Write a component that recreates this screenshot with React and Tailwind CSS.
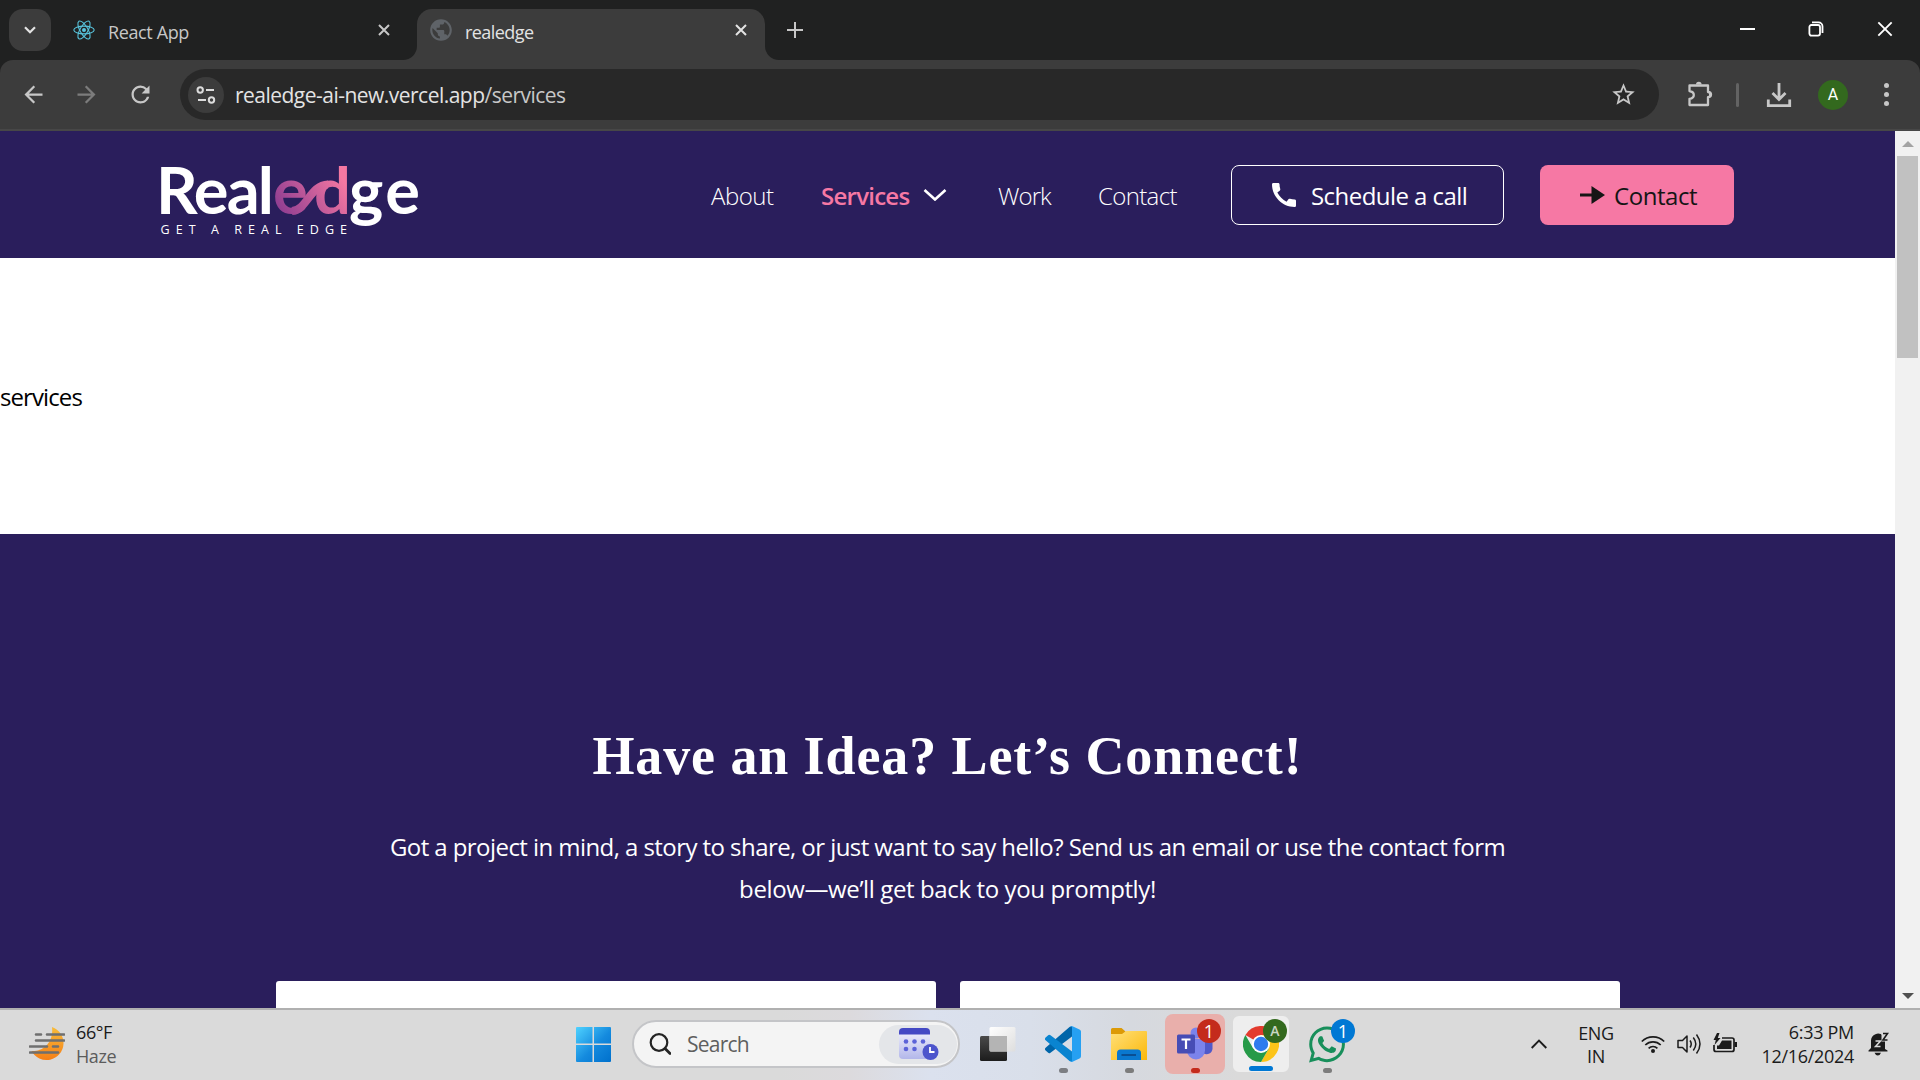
import React from "react";
import { MdPublic, MdStarBorder, MdArrowBack, MdArrowForward, MdRefresh, MdCall } from "react-icons/md";
import { FaWhatsapp } from "react-icons/fa";

const CloseIcon = ({ className }) => (
  <svg className={className} viewBox="0 0 12 12" fill="none" stroke="currentColor">
    <path d="M1 1l10 10M11 1L1 11" />
  </svg>
);

const ReactLogo = () => (
  <svg className="h-[22px] w-[22px]" viewBox="-11 -11 22 22" fill="none" stroke="#58c4dc" strokeWidth="1.1">
    <circle r="2" fill="#58c4dc" stroke="none" />
    <ellipse rx="10.2" ry="3.9" />
    <ellipse rx="10.2" ry="3.9" transform="rotate(60)" />
    <ellipse rx="10.2" ry="3.9" transform="rotate(120)" />
  </svg>
);

function TabStrip() {
  return (
    <div className="flex h-[60px] bg-[#202121]">
      <button className="mt-[9px] ml-[9px] flex h-[42px] w-[42px] items-center justify-center rounded-[14px] bg-[#3c3c3c]">
        <svg className="h-3 w-3" viewBox="0 0 12 12" fill="none" stroke="#e3e3e3" strokeWidth="2.2">
          <path d="M1 3.2l5 5 5-5" />
        </svg>
      </button>
      <div className="flex w-[352px] items-center pl-[22px] text-[#c7c7c7]">
        <ReactLogo />
        <span className="ml-[13px] w-[200px] pt-[3px] text-[18px] leading-6 tracking-[-0.38px]">React App</span>
        <CloseIcon className="ml-[70px] h-3 w-3 stroke-2" />
      </div>
      <div className="h-[14px] w-[14px] self-end bg-[#3c3c3c]">
        <div className="h-full w-full rounded-br-[14px] bg-[#202121]" />
      </div>
      <div className="mt-[9px] flex w-[348px] items-center rounded-t-[15px] bg-[#3c3c3c] pb-[9px] pl-[11px] text-[#e3e3e3]">
        <MdPublic className="h-[26px] w-[26px] text-[#5f6368]" />
        <span className="ml-[11px] w-[200px] pt-[3px] text-[18px] leading-6 tracking-[-0.55px]">realedge</span>
        <CloseIcon className="ml-[70px] h-3 w-3 stroke-2" />
      </div>
      <div className="h-[14px] w-[14px] self-end bg-[#3c3c3c]">
        <div className="h-full w-full rounded-bl-[14px] bg-[#202121]" />
      </div>
      <svg className="mt-[22px] ml-2 h-4 w-4" viewBox="0 0 16 16" stroke="#c7c7c7" strokeWidth="2">
        <path d="M8 0v16M0 8h16" />
      </svg>
      <div className="mt-[21px] ml-auto flex h-4 items-center pr-[27px] text-white">
        <div className="h-[2px] w-[15px] bg-white" />
        <svg className="ml-[52.500px] h-4 w-4" viewBox="0 0 16 16" fill="none" stroke="currentColor" strokeWidth="1.8">
          <rect x="1.4" y="4" width="10.6" height="10.6" rx="2" />
          <path d="M4 1.4h6.5a4 4 0 0 1 4 4V12" />
        </svg>
        <CloseIcon className="ml-[53.500px] h-4 w-4 stroke-[1.4]" />
      </div>
    </div>
  );
}

function Toolbar() {
  return (
    <div className="bg-[#202121]">
      <div className="flex h-[71px] items-center rounded-t-[13px] border-b-2 border-[#474747] bg-[#3c3c3c] text-[#c7c7c7]">
        <MdArrowBack className="ml-5 h-[27px] w-[27px]" />
        <MdArrowForward className="ml-[26px] h-[27px] w-[27px] text-[#7c7c7c]" />
        <MdRefresh className="ml-[27px] h-[27px] w-[27px]" />
        <div className="ml-[26px] flex h-[51px] w-[1479px] items-center rounded-full bg-[#282828] pl-2">
          <div className="flex h-9 w-9 items-center justify-center rounded-full bg-[#3c3c3c]">
            <svg className="h-[18px] w-5" viewBox="0 0 20 18" fill="none" stroke="#dcdcdc" strokeWidth="2">
              <circle cx="4.2" cy="4" r="2.7" />
              <path d="M10 4h8M2 14h8" />
              <circle cx="15.5" cy="14" r="2.7" />
            </svg>
          </div>
          <span className="ml-[11px] text-[21px] leading-7 tracking-[-0.52px] text-[#e3e3e3]">
            realedge-ai-new.vercel.app<span className="text-[#c7c7c7]">/services</span>
          </span>
          <MdStarBorder className="mr-[22px] ml-auto h-[27px] w-[27px]" />
        </div>
        <svg className="mb-0.5 ml-7 h-[26px] w-[26px]" viewBox="0 0 26 26" fill="none" stroke="currentColor" strokeWidth="2.3" strokeLinejoin="round">
          <path d="M2.5 4.5H21V11q3 .2 3 2.6T21 16.200V24H2.500V17.800q4.300-.7 4.300-3.900T2.500 10z" />
          <path d="M9 3.500a2.800 2.800 0 0 1 5.600 0zM22 11a2.700 2.700 0 0 1 0 5.400z" fill="currentColor" stroke="none" />
        </svg>
        <div className="ml-[23px] h-6 w-[3px] rounded bg-[#636363]" />
        <svg className="ml-[27px] h-[26px] w-[26px]" viewBox="0 0 26 26" fill="none" stroke="currentColor" strokeWidth="2.8">
          <path d="M13 1v16M6.500 11l6.500 6.500 6.500-6.500M2.300 17.500v6.200h21.400v-6.200" />
        </svg>
        <div className="ml-[26px] flex h-[30px] w-[30px] items-center justify-center rounded-full bg-[#33691e] font-[Roboto] text-[16px] text-white">A</div>
        <div className="ml-[36px] flex flex-col gap-1">
          <div className="h-[5px] w-[5px] rounded-full bg-[#c7c7c7]" />
          <div className="h-[5px] w-[5px] rounded-full bg-[#c7c7c7]" />
          <div className="h-[5px] w-[5px] rounded-full bg-[#c7c7c7]" />
        </div>
      </div>
    </div>
  );
}

const Logo = () => (
  <svg className="ml-[160px] h-[127px] w-[262px] overflow-visible" viewBox="0 0 262 127" fontFamily="Lato, sans-serif">
    <defs>
      <linearGradient id="edge" gradientUnits="userSpaceOnUse" x1="117" y1="84" x2="180" y2="44">
        <stop offset="0" stopColor="#8a3a90" />
        <stop offset="1" stopColor="#f578a2" />
      </linearGradient>
    </defs>
    <text x="-4" y="83" fontSize="65" fontWeight="700" fill="#fff" textLength="118" lengthAdjust="spacing">Real</text>
    <text x="113" y="83" fontSize="65" fontWeight="700" fill="url(#edge)" textLength="78" lengthAdjust="spacing">ed</text>
    <path d="M132 80C147 79 150 54 168 53.500" fill="none" stroke="url(#edge)" strokeWidth="8" />
    <text x="189" y="83" fontSize="65" fontWeight="700" fill="#fff" textLength="71" lengthAdjust="spacing">ge</text>
    <text x="0.500" y="103" fontSize="12.500" fontFamily="Open Sans, sans-serif" fill="#fff" textLength="186.500" lengthAdjust="spacing">GET A REAL EDGE</text>
  </svg>
);

function SiteHeader() {
  return (
    <header className="flex h-[127px] items-center bg-[#2a1e5c] text-[24px] leading-8 text-white">
      <Logo />
      <nav className="ml-[289px] flex items-center pt-[2px] font-light">
        <a className="w-[110px] tracking-[-0.5px]">About</a>
        <a className="flex w-[177px] items-center font-semibold tracking-[-0.75px] text-[#f678a4]">
          <span className="w-[102px]">Services</span>
          <svg className="mb-[2px] h-3 w-6" viewBox="0 0 24 12" fill="none" stroke="#fff" strokeWidth="2.600">
            <path d="M1.500 1l10.500 9.500L22.500 1" />
          </svg>
        </a>
        <a className="w-[100px] tracking-[-0.9px]">Work</a>
        <a className="w-[80px] tracking-[-0.65px]">Contact</a>
      </nav>
      <button className="ml-[53px] flex h-[60px] w-[273px] items-center rounded-lg border border-white pl-[36px]">
        <MdCall className="h-8 w-8" />
        <span className="ml-[11px] pt-[3px] tracking-[-0.55px] whitespace-nowrap">Schedule a call</span>
      </button>
      <button className="ml-9 flex h-[60px] w-[194px] items-center rounded-lg bg-[#f678a4] pl-10 text-[#151515]">
        <svg className="h-[18px] w-[25px]" viewBox="0 0 25 18" fill="currentColor">
          <path d="M0 7.500h11.500V0L25 9 11.500 18v-7.500H0z" />
        </svg>
        <span className="ml-[9px] pt-[3px] tracking-[-0.45px]">Contact</span>
      </button>
    </header>
  );
}

function Page() {
  return (
    <div className="flex h-[877px]">
      <main className="flex w-[1895px] flex-col overflow-hidden bg-white">
        <SiteHeader />
        <section className="flex h-[276px] shrink-0 items-center pt-[2px] text-[24px] leading-9 tracking-[-0.9px] text-black">services</section>
        <section className="flex flex-1 flex-col items-center bg-[#2a1e5c] text-center text-white">
          <h1 className="mt-[188px] font-['Liberation_Serif',serif] text-[54px] leading-[68px] font-bold tracking-[0.9px]">Have an Idea? Let’s Connect!</h1>
          <p className="mt-9 text-[24px] leading-[42px] whitespace-nowrap">
            <span className="tracking-[-0.565px]">Got a project in mind, a story to share, or just want to say hello? Send us an email or use the contact form</span>
            <br />
            <span className="tracking-[-0.38px]">below—we’ll get back to you promptly!</span>
          </p>
          <div className="mt-[71px] flex flex-1 gap-6">
            <div className="w-[660px] rounded-t-[3px] bg-white" />
            <div className="w-[660px] rounded-t-[3px] bg-white" />
          </div>
        </section>
      </main>
      <div className="flex w-[25px] flex-col items-center bg-[#f1f1f1]">
        <svg className="mt-[10px] h-[6px] w-3" viewBox="0 0 12 6" fill="#a3a3a3"><path d="M6 0l6 6H0z" /></svg>
        <div className="mt-[9px] h-[202px] w-[21px] bg-[#c1c1c1]" />
        <svg className="mt-auto mb-[9px] h-[6px] w-3" viewBox="0 0 12 6" fill="#505050"><path d="M6 6l6-6H0z" /></svg>
      </div>
    </div>
  );
}

const WeatherIcon = () => (
  <svg className="h-9 w-9" viewBox="0 0 36 36">
    <defs>
      <linearGradient id="moon" x1="0" y1="0" x2="0" y2="1">
        <stop offset="0" stopColor="#f8bc3a" />
        <stop offset="1" stopColor="#f57f17" />
      </linearGradient>
    </defs>
    <path d="M23 1C31 4 35 11 34.500 18A17 17 0 0 1 2.500 25C12 26 25 18 23 1z" fill="url(#moon)" />
    <path d="M7 8.500h5M18 8.500h17M7 14.500h28M1 20.500h17M24 20.500h5M1 26.500h28" stroke="#6f6f6f" strokeWidth="2.600" strokeLinecap="round" />
  </svg>
);

const StartIcon = () => (
  <svg className="h-[35px] w-[35px]" viewBox="0 0 35 35">
    <defs>
      <linearGradient id="win" x1="0" y1="0" x2="35" y2="35" gradientUnits="userSpaceOnUse">
        <stop offset="0" stopColor="#4fd2ff" />
        <stop offset=".55" stopColor="#148ade" />
        <stop offset="1" stopColor="#0070cc" />
      </linearGradient>
    </defs>
    <path d="M1 0h15.500v16.500H0V1q0-1 1-1zM18 0h16q1 0 1 1v15.500H18zM0 18h16.500v17H1q-1 0-1-1zM18 18h17v16q0 1-1 1H18z" fill="url(#win)" />
  </svg>
);

const CalendarIcon = () => (
  <svg className="h-8 w-10" viewBox="0 0 40 32">
    <defs>
      <linearGradient id="cal" x1="0" y1="0" x2="0" y2="1">
        <stop offset="0" stopColor="#f4f4fd" />
        <stop offset="1" stopColor="#b3b7ea" />
      </linearGradient>
    </defs>
    <rect y="1" width="31" height="30" rx="4" fill="url(#cal)" />
    <path d="M0 6.500V4a4 4 0 0 1 4-4h23a4 4 0 0 1 4 4v2.500z" fill="#4449c4" />
    <g fill="#5c63d8">
      <circle cx="7" cy="13.500" r="2.300" /><circle cx="15.500" cy="13.500" r="2.300" /><circle cx="24" cy="13.500" r="2.300" />
      <circle cx="7" cy="21" r="2.300" /><circle cx="15.500" cy="21" r="2.300" />
    </g>
    <circle cx="31.500" cy="24" r="8" fill="#4d55cc" />
    <path d="M31 19v5h4.500" fill="none" stroke="#fff" strokeWidth="1.800" />
  </svg>
);

const TaskViewIcon = () => (
  <svg className="h-9 w-9" viewBox="0 0 36 36">
    <defs>
      <linearGradient id="tvDark" x1="0" y1="0" x2="0" y2="1">
        <stop offset="0" stopColor="#4a4a4a" /><stop offset="1" stopColor="#1c1c1c" />
      </linearGradient>
      <linearGradient id="tvLight" x1="0" y1="0" x2="1" y2="1">
        <stop offset="0" stopColor="#fff" /><stop offset="1" stopColor="#dedede" />
      </linearGradient>
    </defs>
    <rect x="0" y="10" width="27" height="25" rx="1.500" fill="url(#tvDark)" />
    <rect x="9.500" y="1" width="26" height="24.500" rx="1.500" fill="url(#tvLight)" />
    <path d="M9.500 10H27v15.500H11a1.500 1.500 0 0 1-1.500-1.500z" fill="#b4b4b4" />
  </svg>
);

const VsCodeIcon = () => (
  <svg className="h-9 w-9" viewBox="0 0 36 36">
    <path d="M27 0v10.500L5.500 26.700a2 2 0 0 1-2.600-.1L.6 24.400a1.900 1.900 0 0 1 0-2.700L24.500 1z" fill="#0065a9" />
    <path d="M27 36V25.500L5.500 9.300a2 2 0 0 0-2.600.1L.6 11.600a1.900 1.900 0 0 0 0 2.700L24.500 35z" fill="#0a84d0" />
    <path d="M24.500 35.500c1 .8 2 .7 3 .2l7-3.300c1-.5 1.500-1.200 1.500-2.300V5.900c0-1.100-.5-1.800-1.500-2.300l-7-3.300c-1-.5-2-.6-3 .2 1.300-.8 2.500 0 2.500 1.500v32c0 1.500-1.200 2.300-2.500 1.500z" fill="#26a0f2" />
  </svg>
);

const FolderIcon = () => (
  <svg className="h-9 w-9" viewBox="0 0 36 36">
    <defs>
      <linearGradient id="fold" x1="0" y1="0" x2="1" y2="1">
        <stop offset="0" stopColor="#ffe07a" /><stop offset="1" stopColor="#fbb809" />
      </linearGradient>
    </defs>
    <path d="M0 3.500a1.500 1.500 0 0 1 1.500-1.500h9l4 3.500V10H0z" fill="#dc9a07" />
    <path d="M0 8h11l4-3h20a1 1 0 0 1 1 1v28H0z" fill="url(#fold)" />
    <path d="M6 34v-7a3.500 3.500 0 0 1 3.500-3.500h17A3.500 3.500 0 0 1 30 27v7z" fill="#0a78cf" />
    <path d="M10.500 29h14.500" stroke="#0b4a8c" strokeWidth="1.800" />
  </svg>
);

const TeamsIcon = () => (
  <svg className="h-9 w-9" viewBox="0 0 36 36">
    <circle cx="19" cy="7" r="5.500" fill="#7b83eb" />
    <path d="M24 13h10.500q1 0 1 1v8.500a6 6 0 0 1-9 5z" fill="#5059c9" />
    <path d="M10 13h18v11.500a9 9 0 0 1-18 0z" fill="#7b83eb" />
    <rect x="0" y="8.500" width="18" height="19" rx="1.500" fill="#474db5" />
    <path d="M4.500 13.500h9M9 13.500v9.500" stroke="#fff" strokeWidth="2.200" />
  </svg>
);

const ChromeIcon = () => (
  <svg className="h-9 w-9" viewBox="-18 -18 36 36">
    <path d="M0 0L-15.600-9A18 18 0 0 1 15.600-9z" fill="#e33b2e" />
    <path d="M0-9H15.600A18 18 0 0 1 0 18L7.800 4.500z" fill="#fcc419" />
    <path d="M-15.600-9A18 18 0 0 0 0 18L7.800 4.500-7.800 4.500z" fill="#269a48" />
    <circle r="9" fill="#fff" />
    <circle r="7.200" fill="#2f7bee" />
  </svg>
);

function TaskApp({ children, tile, indicator, badge }) {
  return (
    <div className={`relative flex h-[60px] w-[60px] shrink-0 items-center justify-center rounded-lg ${tile || ""}`}>
      {children}
      {badge}
      {indicator && <div className={`absolute bottom-px h-[5px] rounded-full ${indicator}`} />}
    </div>
  );
}

const badgeBase = "absolute top-[5px] flex h-6 w-6 items-center justify-center rounded-full text-[18px] leading-6 text-white";

function Taskbar() {
  return (
    <footer className="flex h-[72px] items-center border-t-2 border-[#b0b0b0] bg-[linear-gradient(90deg,#dadada_0,#dadada_780px,#dcdadd_850px,#dbe1ee_930px,#d9dfea_1030px,#d6d9df_1130px,#dadada_1240px)] pb-[2px] text-[18px] leading-6 text-[#1b1b1b]">
      <div className="flex w-[576px] items-center pl-[29px]">
        <WeatherIcon />
        <div className="mb-px ml-[11px] tracking-[-0.4px]">
          <div>66°F</div>
          <div className="text-[#5c5c5c]">Haze</div>
        </div>
      </div>
      <StartIcon />
      <div className="ml-[21px] flex h-12 w-[328px] items-center rounded-full border-2 border-[#c4c5c8] bg-[#f4f4f4] pl-[15px]">
        <svg className="h-[22px] w-[22px]" viewBox="0 0 22 22" fill="none" stroke="#242424" strokeWidth="2.200" strokeLinecap="round">
          <circle cx="10" cy="9.500" r="8.300" />
          <path d="M16 15.500l5 5" strokeWidth="2.800" />
        </svg>
        <span className="ml-4 text-[21px] leading-7 tracking-[-0.75px] text-[#5f5f5f]">Search</span>
        <div className="mr-px ml-auto flex h-[39px] w-[78px] items-center justify-center rounded-full bg-[#e4e6e9] pl-0.5">
          <CalendarIcon />
        </div>
      </div>
      <div className="ml-[7px] flex gap-[6px]">
        <TaskApp tile="pl-0.5"><TaskViewIcon /></TaskApp>
        <TaskApp indicator="w-[9px] bg-[#7c7e83]"><VsCodeIcon /></TaskApp>
        <TaskApp indicator="w-[9px] bg-[#7c7c7c]"><FolderIcon /></TaskApp>
        <TaskApp
          tile="bg-[#e9afab]"
          indicator="w-[9px] bg-[#c42b1c]"
          badge={<div className={`${badgeBase} right-1 bg-[#c42b1c]`}>1</div>}
        >
          <TeamsIcon />
        </TaskApp>
        <TaskApp
          tile="border-2 border-[#dadada] bg-[#eeeeee]"
          indicator="w-6 bg-[#0078d4]"
          badge={<div className="absolute top-[3px] right-[2px] flex h-6 w-6 items-center justify-center rounded-full bg-[#33691e] text-[14px] font-semibold text-[#c9d6c4]">A</div>}
        >
          <ChromeIcon />
        </TaskApp>
        <TaskApp
          indicator="w-[9px] bg-[#7c7c7c]"
          badge={<div className={`${badgeBase} right-[2px] bg-[#0078d4]`}>1</div>}
        >
          <FaWhatsapp className="h-[41px] w-9 text-[#188f5b]" />
        </TaskApp>
      </div>
      <svg className="ml-[174px] h-[10px] w-4" viewBox="0 0 16 10" fill="none" stroke="currentColor" strokeWidth="1.900">
        <path d="M.7 9L8 1.700 15.300 9" />
      </svg>
      <div className="ml-[29px] w-10 pt-[2px] text-center tracking-[-0.3px]">
        <div className="leading-[23px]">ENG</div>
        <div className="leading-[23px]">IN</div>
      </div>
      <svg className="ml-[25px] h-5 w-6" viewBox="0 0 24 20" fill="none" stroke="currentColor" strokeWidth="1.700">
        <path d="M.8 7.500a16 16 0 0 1 22.400 0M4.300 11a11 11 0 0 1 15.400 0M7.600 14.300a6.300 6.300 0 0 1 8.800 0" />
        <circle cx="12" cy="17" r="2" fill="currentColor" stroke="none" />
      </svg>
      <svg className="ml-3 h-[22px] w-6" viewBox="0 0 24 22" fill="none" stroke="currentColor" strokeWidth="1.500">
        <path d="M1 7.500h4.500L10 3v16l-4.500-4.500H1z" strokeLinejoin="round" />
        <path d="M13 7.500q2.500 3.500 0 7M16.300 4.500q5 6.500 0 13M19.500 1.500q7 9.500 0 19" />
      </svg>
      <svg className="ml-3 h-[22px] w-6" viewBox="0 0 24 22" fill="none" stroke="currentColor" strokeWidth="1.700">
        <path d="M9 5h10a2 2 0 0 1 2 2v9.500a2 2 0 0 1-2 2H3a2 2 0 0 1-2-2V12" />
        <path d="M9 7.500h9.500v8.500H4V12.500h2z" fill="currentColor" stroke="none" />
        <path d="M21.500 9H24v5h-2.500z" fill="currentColor" stroke="none" />
        <path d="M4 0L.5 7h2.300L1.500 12 7.500 5H4.800L6.500 0z" fill="currentColor" stroke="none" />
      </svg>
      <div className="mb-px ml-auto text-right tracking-[-0.3px]">
        <div>6:33 PM</div>
        <div>12/16/2024</div>
      </div>
      <svg className="mr-[31px] ml-[14px] h-6 w-[21px]" viewBox="0 0 21 24">
        <path d="M3 8.500a7 7 0 0 1 12-4.700h2V17l2.500 1.500v1H.5v-1L3 16zM6.500 20.800h6.500q-1 2.700-3.200 2.700t-3.300-2.700z" fill="#1b1b1b" />
        <path d="M7.500 9h5l-5 5.500h5" fill="none" stroke="#dadada" strokeWidth="1.500" />
        <path d="M13.500 0h7.500v9.500h-7.500z" fill="#dadada" />
        <path d="M15 1.500h4.500L15 8h4.500" fill="none" stroke="#1b1b1b" strokeWidth="1.600" />
      </svg>
    </footer>
  );
}

export default function App() {
  return (
    <div className="flex h-[1080px] w-[1920px] flex-col overflow-hidden font-['Open_Sans',sans-serif]">
      <TabStrip />
      <Toolbar />
      <Page />
      <Taskbar />
    </div>
  );
}
